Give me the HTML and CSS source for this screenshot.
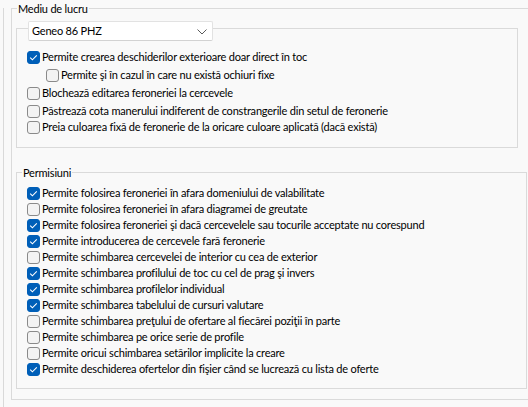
FILE: index.html
```html
<!DOCTYPE html>
<html lang="ro">
<head>
<meta charset="utf-8">
<link rel="stylesheet" href="styles.css">
</head>
<body>
<div class="panel">
  <section class="group outer">
    <div class="legend">Mediu de lucru</div>
    <div class="group env">
      <div class="combo">
        <span class="combo-text">Geneo 86 PHZ</span>
        <svg class="chev" width="10" height="6" viewBox="0 0 10 6"><path d="M0.5 0.5 L5 5 L9.5 0.5" fill="none" stroke="#5a5a5a" stroke-width="1"/></svg>
      </div>
      <div class="rows env-rows">
        <label class="row loose"><span class="cb on"><svg width="13" height="13" viewBox="0 0 13 13"><path d="M3.2 6.6 L5.4 8.8 L9.8 4.3" fill="none" stroke="#fff" stroke-width="1.1"/></svg></span><span class="txt">Permite crearea deschiderilor exterioare doar direct în toc</span></label>
        <label class="row loose sub"><span class="cb"></span><span class="txt">Permite şi în cazul în care nu există ochiuri fixe</span></label>
        <label class="row loose"><span class="cb"></span><span class="txt">Blochează editarea feroneriei la cercevele</span></label>
        <label class="row"><span class="cb"></span><span class="txt">Păstrează cota manerului indiferent de constrangerile din setul de feronerie</span></label>
        <label class="row"><span class="cb"></span><span class="txt">Preia culoarea fixă de feronerie de la oricare culoare aplicată (dacă există)</span></label>
      </div>
    </div>
    <section class="group perms">
      <div class="legend">Permisiuni</div>
      <div class="rows perm-rows">
        <label class="row"><span class="cb on"><svg width="13" height="13" viewBox="0 0 13 13"><path d="M3.2 6.6 L5.4 8.8 L9.8 4.3" fill="none" stroke="#fff" stroke-width="1.1"/></svg></span><span class="txt">Permite folosirea feroneriei în afara domeniului de valabilitate</span></label>
        <label class="row"><span class="cb"></span><span class="txt">Permite folosirea feroneriei în afara diagramei de greutate</span></label>
        <label class="row"><span class="cb on"><svg width="13" height="13" viewBox="0 0 13 13"><path d="M3.2 6.6 L5.4 8.8 L9.8 4.3" fill="none" stroke="#fff" stroke-width="1.1"/></svg></span><span class="txt">Permite folosirea feroneriei şi dacă cercevelele sau tocurile acceptate nu corespund</span></label>
        <label class="row"><span class="cb on"><svg width="13" height="13" viewBox="0 0 13 13"><path d="M3.2 6.6 L5.4 8.8 L9.8 4.3" fill="none" stroke="#fff" stroke-width="1.1"/></svg></span><span class="txt">Permite introducerea de cercevele fară feronerie</span></label>
        <label class="row"><span class="cb"></span><span class="txt">Permite schimbarea cercevelei de interior cu cea de exterior</span></label>
        <label class="row"><span class="cb on"><svg width="13" height="13" viewBox="0 0 13 13"><path d="M3.2 6.6 L5.4 8.8 L9.8 4.3" fill="none" stroke="#fff" stroke-width="1.1"/></svg></span><span class="txt">Permite schimbarea profilului de toc cu cel de prag şi invers</span></label>
        <label class="row"><span class="cb on"><svg width="13" height="13" viewBox="0 0 13 13"><path d="M3.2 6.6 L5.4 8.8 L9.8 4.3" fill="none" stroke="#fff" stroke-width="1.1"/></svg></span><span class="txt">Permite schimbarea profilelor individual</span></label>
        <label class="row"><span class="cb on"><svg width="13" height="13" viewBox="0 0 13 13"><path d="M3.2 6.6 L5.4 8.8 L9.8 4.3" fill="none" stroke="#fff" stroke-width="1.1"/></svg></span><span class="txt">Permite schimbarea tabelului de cursuri valutare</span></label>
        <label class="row"><span class="cb"></span><span class="txt">Permite schimbarea preţului de ofertare al fiecărei poziţii în parte</span></label>
        <label class="row"><span class="cb"></span><span class="txt">Permite schimbarea pe orice serie de profile</span></label>
        <label class="row"><span class="cb"></span><span class="txt">Permite oricui schimbarea setărilor implicite la creare</span></label>
        <label class="row"><span class="cb on"><svg width="13" height="13" viewBox="0 0 13 13"><path d="M3.2 6.6 L5.4 8.8 L9.8 4.3" fill="none" stroke="#fff" stroke-width="1.1"/></svg></span><span class="txt">Permite deschiderea ofertelor din fişier când se lucrează cu lista de oferte</span></label>
      </div>
    </section>
  </section>
</div>
</body>
</html>
```
FILE: styles.css
```css
html, body {
  margin: 0;
  padding: 0;
  background: #f9f9f9;
  overflow: hidden;
}

body {
  width: 528px;
  height: 407px;
  font-family: Lato, "Noto Sans", sans-serif;
  font-size: 11px;
  letter-spacing: -0.2px;
  color: #000;
}

.panel {
  margin-left: 3px;
  height: 407px;
  box-sizing: border-box;
  border-left: 1px solid #d9d9d9;
  padding-left: 7px;
}

.group {
  border: 1px solid #dadada;
}

.outer {
  margin-top: 8px;
  width: 516px;
  border-right: none;
  padding-bottom: 10px;
}

.legend {
  width: fit-content;
  margin-top: -8px;
  margin-left: 5px;
  padding: 0 1px;
  line-height: 16px;
  background: #f9f9f9;
  white-space: nowrap;
}

.env {
  margin-top: 11px;
  margin-left: 4px;
  width: 490px;
  padding: 0 0 12px 10px;
}

.combo {
  margin-top: -8px;
  margin-left: 1px;
  width: 185px;
  height: 20px;
  box-sizing: border-box;
  border: 1px solid #e2e2e2;
  border-bottom-color: #d2d2d2;
  border-radius: 2px;
  background: #ffffff;
  display: flex;
  align-items: center;
  justify-content: space-between;
  padding: 0 3px 0 3px;
  line-height: 18px;
}

.chev {
  margin-right: 2px;
  margin-top: 1px;
}

.rows {
  display: flex;
  flex-direction: column;
}

.env-rows {
  margin-top: 8px;
}

.perm-rows {
  margin-top: 4px;
  padding-left: 10px;
}

.perms {
  margin-top: 24px;
  margin-left: 4px;
  width: 509px;
  padding-bottom: 11px;
}

.row {
  display: flex;
  align-items: flex-start;
  height: 16px;
  line-height: 16px;
  white-space: nowrap;
}

.row.loose {
  margin-bottom: 2px;
}

.row.sub {
  padding-left: 19px;
}

.cb {
  flex: none;
  width: 13px;
  height: 13px;
  margin-top: 2px;
  margin-right: 2px;
  box-sizing: border-box;
  border: 1px solid #8a8a8a;
  border-radius: 3px;
  background: #f3f3f3;
  display: flex;
}

.cb.on {
  border-color: #005fb8;
  background: #005fb8;
}

.cb.on svg {
  margin: -1px;
}
```
